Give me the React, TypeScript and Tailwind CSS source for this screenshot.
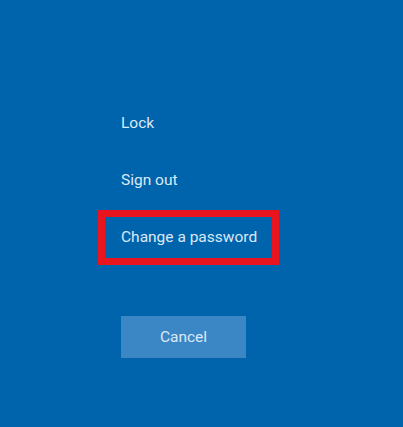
const menuText = 'text-[15.5px] leading-[20px] text-[#dbe9f6]'

const App = () => {
  return (
    <div
      className="h-[427px] w-[403px] overflow-hidden bg-[#0064ad] pl-[121px] pt-[113px]"
      style={{ fontFamily: 'Roboto, "Open Sans", sans-serif' }}
    >
      <div className="flex flex-col items-start">
        <div className={menuText}>Lock</div>
        <div className={`mt-[37px] ${menuText}`}>Sign out</div>
        <div className="ml-[-23px] mt-[20px] w-[181px] border-[7px] border-[#e8151f] pb-[11px] pl-[16px] pt-[10px]">
          <div className={menuText}>Change a password</div>
        </div>
        <button
          type="button"
          className="mt-[51px] flex h-[42px] w-[125px] items-center justify-center bg-[#3b86c5] text-[15.5px] leading-[20px] text-[#dbe9f6]"
        >
          Cancel
        </button>
      </div>
    </div>
  )
}

export default App
